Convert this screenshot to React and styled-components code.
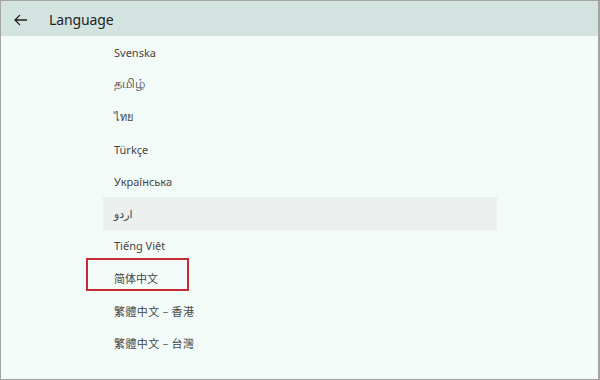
import React from "react";
import styled, { createGlobalStyle } from "styled-components";

const Global = createGlobalStyle`
  html, body { margin: 0; padding: 0; }
  body { font-family: "Noto Sans", "Open Sans", "Noto Sans CJK SC", sans-serif; }
`;

const Window = styled.div`
  width: 600px;
  height: 380px;
  box-sizing: border-box;
  border: 1px solid #a3a3a3;
  border-right-width: 2px;
  background: #f3fbf8;
  display: flex;
  flex-direction: column;
  overflow: hidden;
`;

const Header = styled.header`
  height: 35px;
  box-sizing: border-box;
  padding-top: 3px;
  flex: none;
  background: #d3e3df;
  display: flex;
  align-items: center;
  padding-left: 12px;
  gap: 22px;
  color: #1f1f1f;
`;

const BackButton = styled.button`
  border: 0;
  background: none;
  padding: 0;
  width: 14px;
  height: 14px;
  display: flex;
  align-items: center;
  justify-content: center;
  color: #1f1f1f;
`;

const Title = styled.h1`
  margin: 0;
  font-size: 14px;
  font-weight: 400;
  letter-spacing: -0.1px;
  line-height: 1;
  padding-bottom: 1px;
`;

const List = styled.ul`
  list-style: none;
  margin: 0;
  padding: 0 0 0 102px;
  width: 394px;
`;

const Row = styled.li`
  position: relative;
  height: 32.3px;
  display: flex;
  align-items: center;
  padding-left: 11px;
  font-size: ${(p) => p.$size || 11}px;
  color: #454545;
  letter-spacing: ${(p) => (p.$tc ? "0.4px" : "0")};
  background: ${(p) => (p.$selected ? "#ebf0ef" : "transparent")};
  font-family: ${(p) =>
    p.$tc
      ? '"Noto Sans CJK TC", "Noto Sans", sans-serif'
      : '"Noto Sans", "Noto Sans CJK SC", "DejaVu Sans", sans-serif'};

  &::after {
    content: "";
    display: ${(p) => (p.$marked ? "block" : "none")};
    position: absolute;
    left: -17px;
    top: -4px;
    width: 103px;
    height: 33px;
    box-sizing: border-box;
    border: 2px solid #c62a35;
  }
`;

const languages = [
  { name: "Svenska" },
  { name: "தமிழ்", size: 12.5 },
  { name: "ไทย" },
  { name: "Türkçe" },
  { name: "Українська" },
  { name: "اردو", selected: true },
  { name: "Tiếng Việt" },
  { name: "简体中文", marked: true },
  { name: "繁體中文 – 香港", tc: true },
  { name: "繁體中文 – 台灣", tc: true },
];

export default function App() {
  return (
    <>
      <Global />
      <Window>
        <Header>
          <BackButton aria-label="Back">
            <svg width="13" height="12" viewBox="0 0 13 12" fill="none">
              <path
                d="M12.5 6H1 M5.6 1.4 L1 6 L5.6 10.6"
                stroke="currentColor"
                strokeWidth="1.3"
                strokeLinecap="round"
                strokeLinejoin="round"
              />
            </svg>
          </BackButton>
          <Title>Language</Title>
        </Header>
        <List>
          {languages.map((l) => (
            <Row
              key={l.name}
              $selected={l.selected}
              $marked={l.marked}
              $tc={l.tc}
              $size={l.size}
            >
              {l.name}
            </Row>
          ))}
        </List>
      </Window>
    </>
  );
}
